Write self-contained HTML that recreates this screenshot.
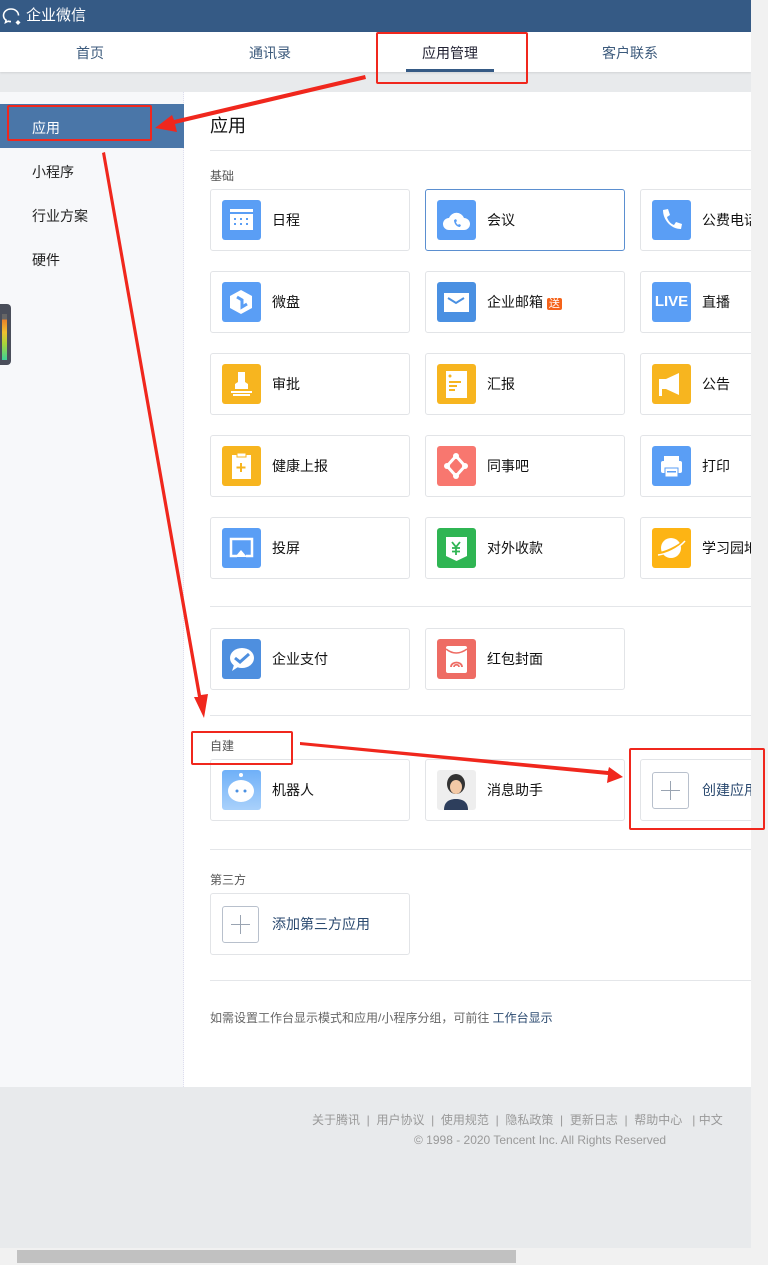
<!DOCTYPE html>
<html><head><meta charset="utf-8"><style>
*{margin:0;padding:0;box-sizing:border-box}
body{width:768px;height:1265px;overflow:hidden;background:#e8eaec;font-family:"Liberation Sans","Noto Sans CJK SC",sans-serif;position:relative}
.a{position:absolute}
.hdr{left:0;top:0;width:751px;height:32px;background:#355a85;color:#fff;font-size:15px;line-height:32px;padding-left:26px}
.nav{left:0;top:32px;width:751px;height:40px;background:#fff;box-shadow:0 1px 2px rgba(0,0,0,.1)}
.nav span{position:absolute;top:11px;font-size:14px;color:#3c5a7c}
.main{left:0;top:92px;width:751px;height:995px;background:#fff}
.side{left:0;top:92px;width:184px;height:995px;background:#f7f8fa;border-right:1px dotted #dde}
.side div{position:absolute;left:32px;font-size:14px;color:#222}
.card{position:absolute;width:200px;height:62px;border:1px solid #e2e4e7;border-radius:3px;background:#fff}
.card .ic{position:absolute;left:11px;top:10px;width:39px;height:40px;border-radius:3px}
.card .t{position:absolute;left:61px;top:20px;font-size:14px;color:#111}
.lbl{position:absolute;left:210px;font-size:12px;color:#555}
.hr{position:absolute;left:210px;width:541px;height:1px;background:#e4e6e9}
.plus{position:absolute;left:11px;top:12px;width:37px;height:37px;border:1px solid #b8c0cc;border-radius:3px}
.plus:before{content:"";position:absolute;left:8px;top:17px;width:19px;height:1px;background:#9aa4b2}
.plus:after{content:"";position:absolute;left:17px;top:8px;width:1px;height:19px;background:#9aa4b2}
.red{position:absolute;border:2px solid #f0271d;border-radius:2px}
</style></head><body>
<div class="a hdr"><svg class="a" style="left:2px;top:7px" width="22" height="20" viewBox="0 0 22 20"><path d="M9 2C4.5 2 1.5 5 1.5 8.5c0 2 1 3.6 2.6 4.7l-.6 2.3 2.6-1.3c1 .3 1.9.4 2.9.4" fill="none" stroke="#fff" stroke-width="1.6"/><path d="M9 2c4.5 0 7.5 3 7.5 6.5" fill="none" stroke="#fff" stroke-width="1.6"/><path d="M16 13l2.5 2.5-2.5 2.5-2.5-2.5z" fill="#fff"/></svg>企业微信</div>
<div class="a nav"><span style="left:76px">首页</span><span style="left:249px">通讯录</span><span style="left:422px;color:#223">应用管理</span><span style="left:602px">客户联系</span><div class="a" style="left:406px;top:37px;width:88px;height:3px;background:#355a85"></div></div>
<div class="a main"></div>
<div class="a side">
<div style="left:0;top:12px;width:184px;height:44px;background:#4a76a8"></div>
<div style="top:26px;color:#fff">应用</div>
<div style="top:70px">小程序</div>
<div style="top:114px">行业方案</div>
<div style="top:158px">硬件</div>
</div>
<div class="a" style="left:0;top:304px;width:11px;height:61px;background:#4a4e5a;border-radius:0 4px 4px 0"><div class="a" style="left:2px;top:10px;width:5px;height:46px;background:linear-gradient(#666 0 12%,#e8802a 12%,#f0c030 40%,#a6d63a 65%,#3ccf9a)"></div></div>
<div class="a" style="left:210px;top:112px;font-size:18px;color:#111">应用</div>
<div class="hr" style="top:150px"></div>
<div class="lbl" style="top:167px">基础</div>

<div class="card" style="left:210px;top:189px"><div class="ic" style="background:#5a9ef5"><svg width="39" height="40"><rect x="8" y="9" width="23" height="21" fill="#fff"/><rect x="8" y="12" width="23" height="2" fill="#5a9ef5"/><g fill="#5a9ef5"><rect x="12" y="18" width="2" height="2"/><rect x="18" y="18" width="2" height="2"/><rect x="24" y="18" width="2" height="2"/><rect x="12" y="23" width="2" height="2"/><rect x="18" y="23" width="2" height="2"/><rect x="24" y="23" width="2" height="2"/></g></svg></div><div class="t">日程</div></div>
<div class="card" style="left:425px;top:189px;border-color:#5b8fd0"><div class="ic" style="background:#5a9ef5"><svg width="39" height="40"><path d="M12 30a6 6 0 0 1 0-12 8 8 0 0 1 15 0 6 6 0 0 1 0 12z" fill="#fff"/><path d="M17 20c0 4 3 7 6 7l1-2-2-1-1 1c-1-1-2-2-2-3l1-1-1-2z" fill="#5a9ef5"/></svg></div><div class="t">会议</div></div>
<div class="card" style="left:640px;top:189px;width:120px"><div class="ic" style="background:#5a9ef5"><svg width="39" height="40"><path d="M11 10l5-1 2 6-3 2c1 4 4 7 7 8l2-3 6 2-1 5c-10 0-18-9-18-19z" fill="#fff"/></svg></div><div class="t">公费电话</div></div>

<div class="card" style="left:210px;top:271px"><div class="ic" style="background:#5a9ef5"><svg width="39" height="40"><path d="M19 8l11 6v12l-11 6-11-6V14z" fill="#fff"/><path d="M15 15l5 3 0 7 5-3" fill="none" stroke="#5a9ef5" stroke-width="3"/></svg></div><div class="t">微盘</div></div>
<div class="card" style="left:425px;top:271px"><div class="ic" style="background:#4a90e2"><svg width="39" height="40"><rect x="7" y="11" width="25" height="19" fill="#fff"/><path d="M11 16l8 5 8-5" fill="none" stroke="#4a90e2" stroke-width="2"/></svg></div><div class="t">企业邮箱 <span style="background:#f5631a;color:#fff;font-size:11px;padding:0 2px;border-radius:2px">送</span></div></div>
<div class="card" style="left:640px;top:271px;width:120px"><div class="ic" style="background:#5a9ef5;color:#fff;font:bold 15px/40px 'Liberation Sans',sans-serif;text-align:center">LIVE</div><div class="t">直播</div></div>

<div class="card" style="left:210px;top:353px"><div class="ic" style="background:#f7b51f"><svg width="39" height="40"><path d="M16 8h7v10l3 2v5H13v-5l3-2z" fill="#fff"/><rect x="9" y="27" width="21" height="2" fill="#fff"/><rect x="11" y="30" width="17" height="2" fill="#fff"/></svg></div><div class="t">审批</div></div>
<div class="card" style="left:425px;top:353px"><div class="ic" style="background:#f7b51f"><svg width="39" height="40"><rect x="9" y="7" width="21" height="27" fill="#fff"/><g fill="#f7b51f"><circle cx="13" cy="12" r="1.5"/><rect x="12" y="17" width="12" height="2"/><rect x="12" y="21" width="8" height="2"/><rect x="12" y="25" width="6" height="2"/></g></svg></div><div class="t">汇报</div></div>
<div class="card" style="left:640px;top:353px;width:120px"><div class="ic" style="background:#f7b51f"><svg width="39" height="40"><path d="M7 15h7l13-6v22l-13-6h-4v7h-3z" fill="#fff"/></svg></div><div class="t">公告</div></div>

<div class="card" style="left:210px;top:435px"><div class="ic" style="background:#f7b51f"><svg width="39" height="40"><rect x="10" y="9" width="19" height="24" fill="#fff"/><rect x="15" y="7" width="9" height="4" fill="#fff" stroke="#f7b51f"/><path d="M19 17v9M14.5 21.5h9" stroke="#f7b51f" stroke-width="2"/></svg></div><div class="t">健康上报</div></div>
<div class="card" style="left:425px;top:435px"><div class="ic" style="background:#f8776f"><svg width="39" height="40"><path d="M19 10L10 20l9 10 9-10z" fill="none" stroke="#fff" stroke-width="3"/><circle cx="19" cy="10" r="3" fill="#fff"/><circle cx="10" cy="20" r="3" fill="#fff"/><circle cx="28" cy="20" r="3" fill="#fff"/><circle cx="19" cy="30" r="3" fill="#fff"/></svg></div><div class="t">同事吧</div></div>
<div class="card" style="left:640px;top:435px;width:120px"><div class="ic" style="background:#5a9ef5"><svg width="39" height="40"><rect x="12" y="10" width="15" height="6" fill="#fff"/><rect x="9" y="15" width="21" height="12" rx="2" fill="#fff"/><rect x="13" y="22" width="13" height="9" fill="#fff" stroke="#5a9ef5"/><rect x="15" y="25" width="9" height="1.5" fill="#5a9ef5"/></svg></div><div class="t">打印</div></div>

<div class="card" style="left:210px;top:517px"><div class="ic" style="background:#5a9ef5"><svg width="39" height="40"><path d="M15 28H9V11h21v17h-6" fill="none" stroke="#fff" stroke-width="2.5"/><path d="M19 22l6 7H13z" fill="#fff"/></svg></div><div class="t">投屏</div></div>
<div class="card" style="left:425px;top:517px"><div class="ic" style="background:#2fb553"><svg width="39" height="40"><path d="M9 9h21v19l-10.5 5L9 28z" fill="#fff"/><path d="M15 14l4 5 4-5M19 19v8M15 20h8M15 23.5h8" stroke="#2fb553" stroke-width="1.8" fill="none"/></svg></div><div class="t">对外收款</div></div>
<div class="card" style="left:640px;top:517px;width:120px"><div class="ic" style="background:#fdb414"><svg width="39" height="40"><circle cx="19" cy="20" r="10" fill="#fff"/><path d="M5 26c8-1 20-6 29-14" stroke="#fdb414" stroke-width="3" fill="none"/><path d="M6 27c8-1 20-6 27-14" stroke="#fff" stroke-width="1.5" fill="none"/></svg></div><div class="t">学习园地</div></div>

<div class="hr" style="top:606px"></div>
<div class="card" style="left:210px;top:628px"><div class="ic" style="background:#4e8fdf"><svg width="39" height="40"><ellipse cx="20" cy="19" rx="12" ry="10" fill="#fff"/><path d="M12 26l-2 6 6-4z" fill="#fff"/><path d="M13 19l5 4 9-8" stroke="#4e8fdf" stroke-width="3" fill="none"/></svg></div><div class="t">企业支付</div></div>
<div class="card" style="left:425px;top:628px"><div class="ic" style="background:#ee6c64"><svg width="39" height="40"><rect x="9" y="7" width="21" height="27" rx="2" fill="#fff"/><path d="M9 10q10 8 21 0" stroke="#ee6c64" stroke-width="1.5" fill="none"/><path d="M14 28c0-6 11-6 11 0M17 28c0-3 5-3 5 0" stroke="#ee6c64" stroke-width="1.8" fill="none"/></svg></div><div class="t">红包封面</div></div>

<div class="hr" style="top:715px"></div>
<div class="lbl" style="top:737px">自建</div>
<div class="card" style="left:210px;top:759px"><div class="ic" style="background:linear-gradient(#6fb0f8,#a9d1fb)"><svg width="39" height="40"><circle cx="19" cy="5" r="2" fill="#fff"/><ellipse cx="19" cy="21" rx="13" ry="11" fill="#fff"/><circle cx="15" cy="21" r="1.5" fill="#4a90e2"/><circle cx="23" cy="21" r="1.5" fill="#4a90e2"/></svg></div><div class="t">机器人</div></div>
<div class="card" style="left:425px;top:759px"><div class="ic" style="background:#eee"><svg width="39" height="40"><ellipse cx="19" cy="14" rx="9" ry="10" fill="#333"/><ellipse cx="19" cy="17" rx="6" ry="7" fill="#f3c9a6"/><path d="M7 40c0-8 5-11 12-11s12 3 12 11z" fill="#2d3e5c"/></svg></div><div class="t">消息助手</div></div>
<div class="card" style="left:640px;top:759px;width:120px"><div class="plus"></div><div class="t" style="color:#2b4a70">创建应用</div></div>

<div class="hr" style="top:849px"></div>
<div class="lbl" style="top:871px">第三方</div>
<div class="card" style="left:210px;top:893px"><div class="plus"></div><div class="t" style="color:#2b4a70">添加第三方应用</div></div>
<div class="hr" style="top:980px"></div>
<div class="a" style="left:210px;top:1009px;font-size:12px;color:#666">如需设置工作台显示模式和应用/小程序分组，可前往 <span style="color:#2b4a70">工作台显示</span></div>

<div class="a" style="left:312px;top:1111px;font-size:12px;color:#999;white-space:nowrap">关于腾讯 &nbsp;| &nbsp;用户协议 &nbsp;| &nbsp;使用规范 &nbsp;| &nbsp;隐私政策 &nbsp;| &nbsp;更新日志 &nbsp;| &nbsp;帮助中心 &nbsp; | 中文</div>
<div class="a" style="left:414px;top:1133px;font-size:12px;color:#999">© 1998 - 2020 Tencent Inc. All Rights Reserved</div>

<div class="a" style="left:751px;top:0;width:17px;height:1265px;background:#f1f1f1"></div>
<div class="a" style="left:0;top:1248px;width:751px;height:17px;background:#f1f1f1"></div>
<div class="a" style="left:17px;top:1250px;width:499px;height:13px;background:#c1c1c1"></div>

<div class="red" style="left:376px;top:32px;width:152px;height:52px"></div>
<div class="red" style="left:7px;top:105px;width:145px;height:36px"></div>
<div class="red" style="left:191px;top:731px;width:102px;height:34px"></div>
<div class="red" style="left:629px;top:748px;width:136px;height:82px"></div>
<svg class="a" style="left:0;top:0" width="768" height="1265">
<g fill="#f0271d">
<polygon points="365,75 366,79 175,124 177,132 155,128 172,115 174,120"/>
<polygon points="102,153 105,152 201,695 208,694 204,718 194,697 198,697"/>
<polygon points="300,742 300,745 608,775 607,783 623,777 609,767 608,771"/>
</g></svg>
</body></html>
